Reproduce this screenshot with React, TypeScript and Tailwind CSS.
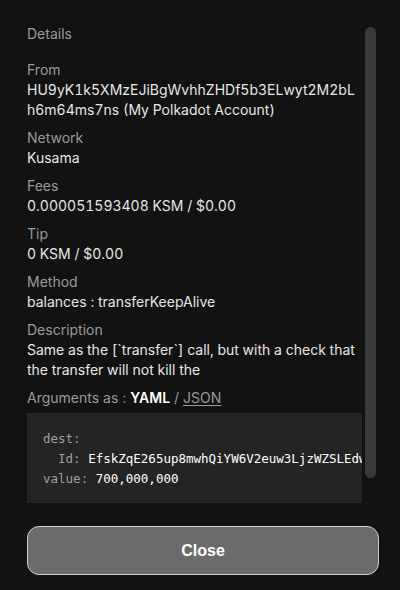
const fields: { label: string; value: string; breakAll?: boolean }[] = [
  { label: 'From', value: 'HU9yK1k5XMzEJiBgWvhhZHDf5b3ELwyt2M2bLh6m64ms7ns (My Polkadot Account)', breakAll: true },
  { label: 'Network', value: 'Kusama' },
  { label: 'Fees', value: '0.000051593408 KSM / $0.00' },
  { label: 'Tip', value: '0 KSM / $0.00' },
  { label: 'Method', value: 'balances : transferKeepAlive' },
  { label: 'Description', value: 'Same as the [`transfer`] call, but with a check that the transfer will not kill the' },
];

export default function App() {
  return (
    <div className="relative flex h-[590px] w-[400px] flex-col bg-[#121212] font-['Inter',sans-serif] text-[14px] leading-[20px] text-[#e6e6e6]">
      <div className="flex-1 overflow-hidden pl-[27px] pr-[38px] pt-6">
        <div className="text-[#9a9a9a]">Details</div>

        <div className="mt-4 flex flex-col gap-2">
          {fields.map((f) => (
            <div key={f.label}>
              <div className="text-[#9a9a9a]">{f.label}</div>
              <div className={f.breakAll ? 'break-all tabular-nums' : 'tabular-nums'}>{f.value}</div>
            </div>
          ))}

          <div>
            <div className="text-[#9a9a9a]">
              Arguments as : <span className="font-semibold text-white">YAML</span> /{' '}
              <span className="underline underline-offset-2">JSON</span>
            </div>
            <pre className="mt-[5px] overflow-hidden bg-[#242424] px-4 pb-[14px] pt-4 font-['DejaVu_Sans_Mono',monospace] text-[12.5px] leading-[20px]">
              <span className="text-[#a0a0a0]">dest:</span>
              {'\n'}
              <span className="text-[#a0a0a0]">{'  Id: '}</span>
              <span className="text-white">EfskZqE265up8mwhQiYW6V2euw3LjzWZSLEdwxGeDzWHeVgB</span>
              {'\n'}
              <span className="text-[#a0a0a0]">value: </span>
              <span className="text-white">700,000,000</span>
            </pre>
          </div>
        </div>
      </div>

      <div className="px-[21px] pb-[15px] pl-[27px]">
        <button className="h-[49px] w-full rounded-xl border border-[#d0d0d0] bg-[#6b6b6b] font-['Liberation_Sans',sans-serif] text-[16px] font-bold text-white">
          Close
        </button>
      </div>

      <div className="absolute left-[365px] top-[27px] h-[451px] w-[11px] rounded-full bg-[#3a3a3a]" />
    </div>
  );
}
